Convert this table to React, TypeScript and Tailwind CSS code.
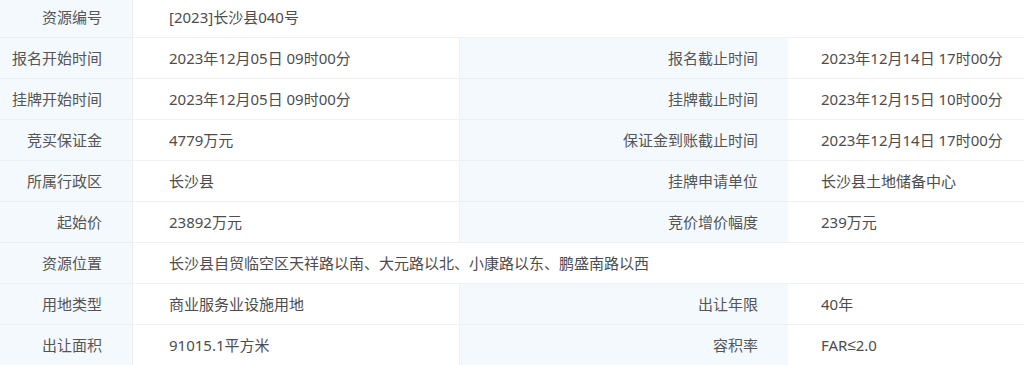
import type { ReactNode } from 'react';

const rows: [string, ReactNode, string?, ReactNode?][] = [
  ['资源编号', '[2023]长沙县040号'],
  ['报名开始时间', '2023年12月05日 09时00分', '报名截止时间', '2023年12月14日 17时00分'],
  ['挂牌开始时间', '2023年12月05日 09时00分', '挂牌截止时间', '2023年12月15日 10时00分'],
  ['竞买保证金', '4779万元', '保证金到账截止时间', '2023年12月14日 17时00分'],
  ['所属行政区', '长沙县', '挂牌申请单位', '长沙县土地储备中心'],
  ['起始价', '23892万元', '竞价增价幅度', '239万元'],
  ['资源位置', '长沙县自贸临空区天祥路以南、大元路以北、小康路以东、鹏盛南路以西'],
  ['用地类型', '商业服务业设施用地', '出让年限', '40年'],
  [
    '出让面积',
    '91015.1平方米',
    '容积率',
    <>
      FAR<span style={{ fontFamily: '"Liberation Sans", sans-serif' }}>≤</span>2.0
    </>,
  ],
];

export default function App() {
  return (
    <div
      className="w-[1024px] h-[365px] overflow-hidden bg-white text-[15px] text-[#4d4d4d]"
      style={{ fontFamily: '"Noto Sans", "Noto Sans CJK SC", sans-serif' }}
    >
      <div className="-mt-[3px] grid grid-cols-[133px_327px_328px_1fr]">
        {rows.map(([l1, v1, l2, v2], i) => (
          <div key={i} className="contents">
            <div className="h-[41px] flex items-center justify-end pr-[30px] bg-[#f3f9fd] border-b border-r border-[#e9eff3] text-[#555]">
              {l1}
            </div>
            {l2 ? (
              <>
                <div className="h-[41px] flex items-center pl-[36px] border-b border-r border-[#eef1f3]">{v1}</div>
                <div className="h-[41px] flex items-center justify-end pr-[30px] bg-[#f3f9fd] border-b border-[#e9eff3] text-[#555]">
                  {l2}
                </div>
                <div className="h-[41px] flex items-center pl-[33px] border-b border-[#eef1f3]">{v2}</div>
              </>
            ) : (
              <div className="col-span-3 h-[41px] flex items-center pl-[36px] border-b border-[#eef1f3]">{v1}</div>
            )}
          </div>
        ))}
      </div>
    </div>
  );
}
